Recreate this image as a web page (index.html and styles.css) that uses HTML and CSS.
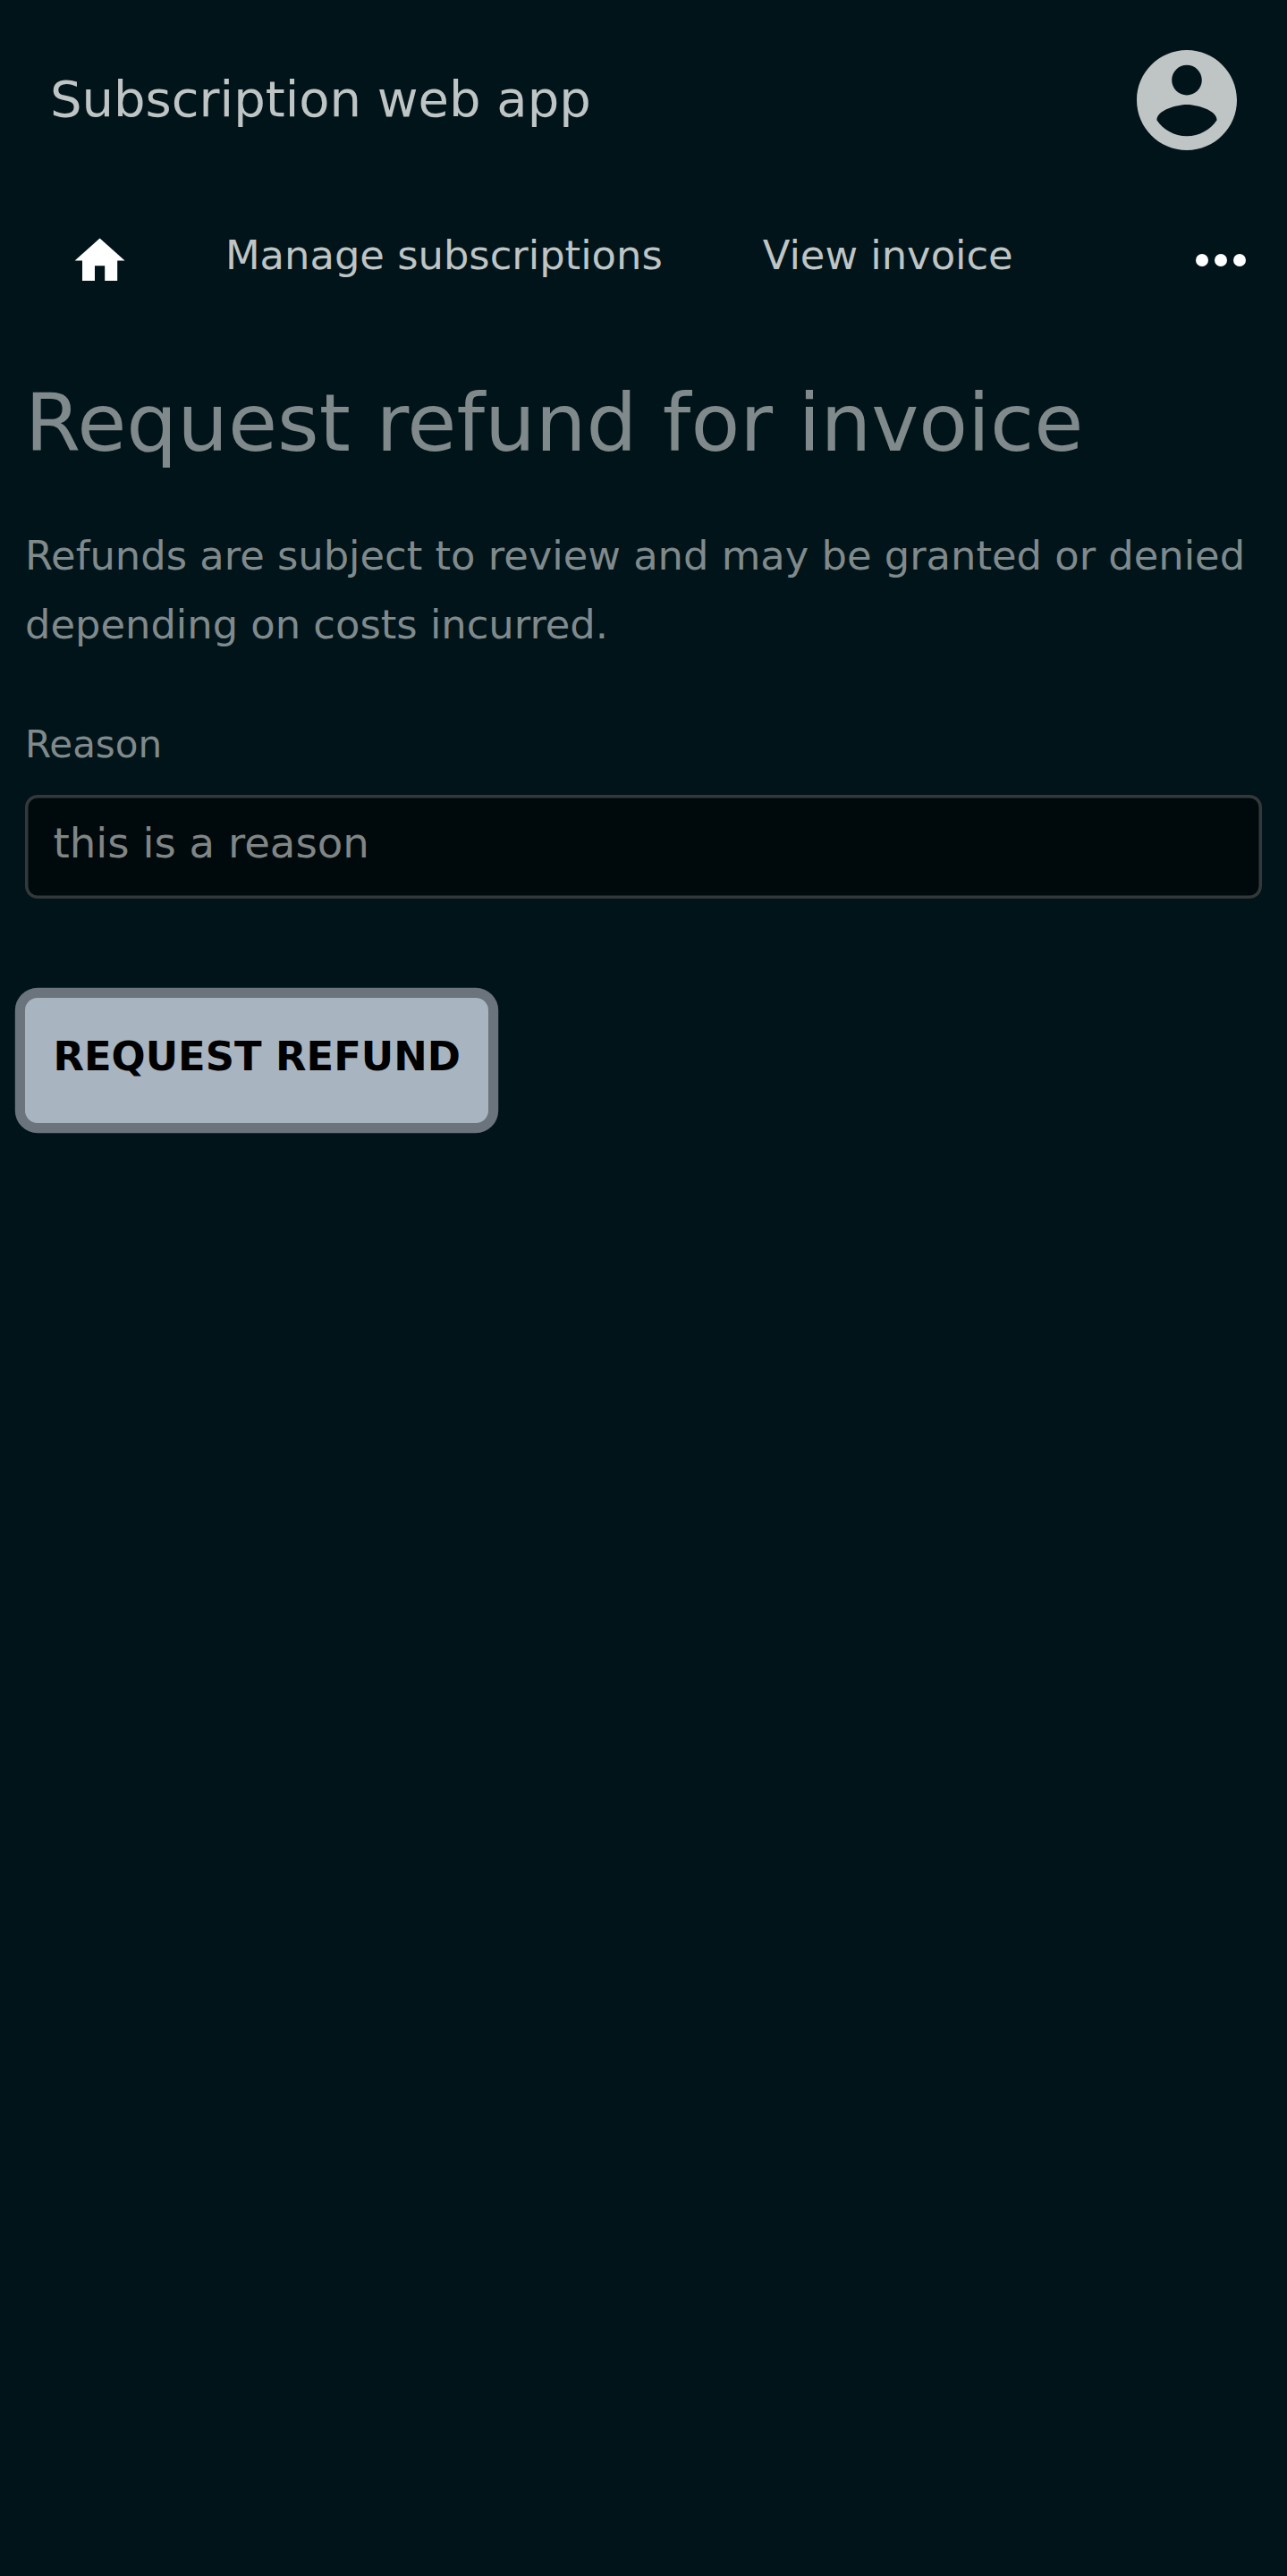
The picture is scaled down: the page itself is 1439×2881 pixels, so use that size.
FILE: index.html
```html
<!DOCTYPE html>
<html lang="en">
<head>
<meta charset="utf-8">
<title>Subscription web app</title>
<link rel="stylesheet" href="styles.css">
</head>
<body>
<header class="header">
  <span class="brand">Subscription web app</span>
  <svg class="avatar" viewBox="2 2 20 20"><path d="M12 2C6.480 2 2 6.480 2 12s4.480 10 10 10 10-4.480 10-10S17.520 2 12 2zm0 3c1.660 0 3 1.340 3 3s-1.340 3-3 3-3-1.340-3-3 1.340-3 3-3zm0 14.200c-2.500 0-4.710-1.280-6-3.220.030-1.990 4-3.080 6-3.080 1.990 0 5.970 1.090 6 3.080-1.290 1.940-3.500 3.220-6 3.220z"/></svg>
</header>
<nav class="nav">
  <svg class="home" viewBox="0 0 24 24"><path d="M10 20v-6h4v6h5v-8h3L12 3 2 12h3v8z"/></svg>
  <a class="link">Manage subscriptions</a>
  <a class="link">View invoice</a>
  <svg class="more" viewBox="0 0 24 24"><circle cx="6" cy="12" r="2"/><circle cx="12" cy="12" r="2"/><circle cx="18" cy="12" r="2"/></svg>
</nav>
<main class="main">
  <h1 class="title">Request refund for invoice</h1>
  <p class="intro">Refunds are subject to review and may be granted or denied depending on costs incurred.</p>
  <label class="label" for="reason">Reason</label>
  <input class="input" id="reason" type="text" value="this is a reason">
  <button class="button" type="button">REQUEST REFUND</button>
</main>
</body>
</html>
```
FILE: styles.css
```css
* { box-sizing: border-box; }
body {
  margin: 0;
  min-height: 2881px;
  background: #001419;
  color: #808a8c;
  font-family: "DejaVu Sans", sans-serif;
  font-size: 44.8px;
  line-height: 77px;
}
.header {
  display: flex;
  align-items: center;
  justify-content: space-between;
  height: 224px;
  padding: 0 56px;
  color: #bfc4c5;
}
.brand { margin-bottom: 3px; font-size: 56px; }
.avatar { width: 112px; height: 112px; fill: currentColor; }
.nav {
  display: flex;
  align-items: flex-start;
  height: 158px;
  padding: 23px 32px 0 78.4px;
  color: #bfc4c5;
}
.home { width: 67.2px; height: 67.2px; margin: 11.4px 106.4px 0 0; fill: #fff; }
.link { margin-right: 112px; }
.more { width: 84px; height: 84px; margin: 1.5px 0 0 auto; fill: #fff; }
.main { padding: 38px 28px 0; }
.title {
  margin: 0 0 57px;
  font-size: 89.6px;
  font-weight: 400;
  line-height: 106px;
}
.intro { margin: 0 0 57px; }
.label { display: block; height: 95px; font-size: 42px; }
.input {
  display: block;
  width: 100%;
  height: 115.5px;
  margin: 0 0 111.5px;
  padding: 0 31.5px 8.5px;
  border: 0;
  border-radius: 14px;
  background: #00090b;
  box-shadow: inset 0 0 0 3.5px #33383d;
  color: #808585;
  font: 46.67px "DejaVu Sans", sans-serif;
}
.button {
  display: block;
  height: 140px;
  padding: 0 31.5px 9px;
  border: 0;
  border-radius: 14px;
  background: #a8b4c0;
  box-shadow: 0 0 0 11.2px #6b737c;
  color: #000;
  font: bold 44.8px "DejaVu Sans", sans-serif;
}
```
